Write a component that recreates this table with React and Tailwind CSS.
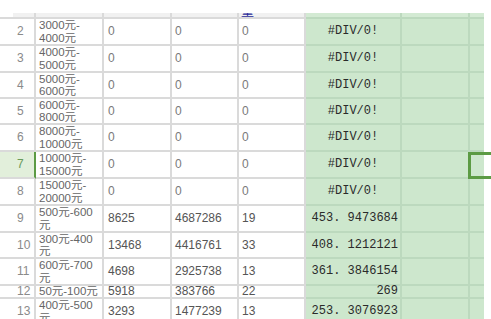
const rows = [
  { n: 2, b: ["3000元-", "4000元"], c: "0", d: "0", e: "0", f: "#DIV/0!", h: "h-[27px]" },
  { n: 3, b: ["4000元-", "5000元"], c: "0", d: "0", e: "0", f: "#DIV/0!", h: "h-[27px]" },
  { n: 4, b: ["5000元-", "6000元"], c: "0", d: "0", e: "0", f: "#DIV/0!", h: "h-[26px]" },
  { n: 5, b: ["6000元-", "8000元"], c: "0", d: "0", e: "0", f: "#DIV/0!", h: "h-[26px]" },
  { n: 6, b: ["8000元-", "10000元"], c: "0", d: "0", e: "0", f: "#DIV/0!", h: "h-[27px]" },
  { n: 7, b: ["10000元-", "15000元"], c: "0", d: "0", e: "0", f: "#DIV/0!", h: "h-[27px]", active: true },
  { n: 8, b: ["15000元-", "20000元"], c: "0", d: "0", e: "0", f: "#DIV/0!", h: "h-[27px]" },
  { n: 9, b: ["500元-600", "元"], c: "8625", d: "4687286", e: "19", f: "453. 9473684", h: "h-[27px]" },
  { n: 10, b: ["300元-400", "元"], c: "13468", d: "4416761", e: "33", f: "408. 1212121", h: "h-[26px]" },
  { n: 11, b: ["600元-700", "元"], c: "4698", d: "2925738", e: "13", f: "361. 3846154", h: "h-[27px]" },
  { n: 12, b: ["50元-100元"], c: "5918", d: "383766", e: "22", f: "269", h: "h-[13px]" },
  { n: 13, b: ["400元-500", "元"], c: "3293", d: "1477239", e: "13", f: "253. 3076923", h: "h-[27px]" },
];

const cols = "grid grid-cols-[36px_68px_68px_67px_67px_96px_68px_21px]";
const line = "border-r-2 border-b-2 border-[#dadada]";
const gline = "border-r-2 border-b-2 border-[#bcd9be]";

function Row({ r }) {
  const zero = r.c === "0";
  const num = zero ? "text-[#7a7a7a]" : "text-[#555]";
  const short = r.b.length === 1;
  return (
    <div className={`${cols} ${r.h} leading-[11px]`}>
      <div
        className={`flex items-center pl-[17px] border-b-2 border-r-2 ${
          r.active ? "bg-[#e2efdb] border-r-[#5c9b44] border-b-[#dadada] text-[#6a9a5a]" : "border-[#dadada] text-[#8a8a8a]"
        }`}
      >
        {r.n}
      </div>
      <div
        className={`${line} flex flex-col justify-center pl-[3px] text-[11.5px] text-[#666] overflow-hidden ${
          short ? "leading-[11px]" : "leading-[12.5px]"
        }`}
      >
        {r.b.map((t) => (
          <span key={t} className="whitespace-nowrap">{t}</span>
        ))}
      </div>
      <div className={`${line} flex items-center pl-[4px] ${num}`}>{r.c}</div>
      <div className={`${line} flex items-center pl-[3px] ${num}`}>{r.d}</div>
      <div className={`${line} flex items-center pl-[3px] ${num}`}>{r.e}</div>
      <div
        className={`${gline} bg-[#cde7cd] flex items-center font-['Liberation_Mono',monospace] text-[#2a2a2a] ${
          r.f.startsWith("#") ? "justify-center" : "justify-end pr-[2px]"
        }`}
      >
        {r.f}
      </div>
      <div className={`${gline} bg-[#cde7cd]`} />
      <div className="relative flex">
        <div className="w-[14px] bg-[#cde7cd] border-b-2 border-[#bcd9be]" />
        {r.active && (
          <div className="absolute -left-[2px] top-0 bottom-0 -right-[4px] border-[3px] border-[#5c9b44]" />
        )}
      </div>
    </div>
  );
}

export default function App() {
  return (
    <div className="w-[491px] h-[319px] overflow-hidden bg-white pt-[13px] text-[12px] font-['Liberation_Sans','Noto_Sans_CJK_SC',sans-serif]">
      <div className={`${cols} h-[6px]`}>
        <div className="border-r-2 border-b-2 border-[#dadada] pl-[13px]">
          <div className="h-full bg-[#f1f1f1]" />
        </div>
        <div className={`${line} bg-[#f1f1f1]`} />
        <div className={`${line} bg-[#f1f1f1]`} />
        <div className={`${line} bg-[#f1f1f1]`} />
        <div className={`${line} bg-[#f1f1f1] overflow-hidden pl-[2px]`}>
          <div className="-mt-[8px] text-[13px] leading-[12px] text-[#2b2b9a]">量</div>
        </div>
        <div className={`${gline} bg-[#d3ead3]`} />
        <div className={`${gline} bg-[#d3ead3]`} />
        <div className="flex">
          <div className="w-[14px] bg-[#d3ead3] border-b-2 border-[#bcd9be]" />
        </div>
      </div>
      {rows.map((r) => (
        <Row key={r.n} r={r} />
      ))}
    </div>
  );
}
